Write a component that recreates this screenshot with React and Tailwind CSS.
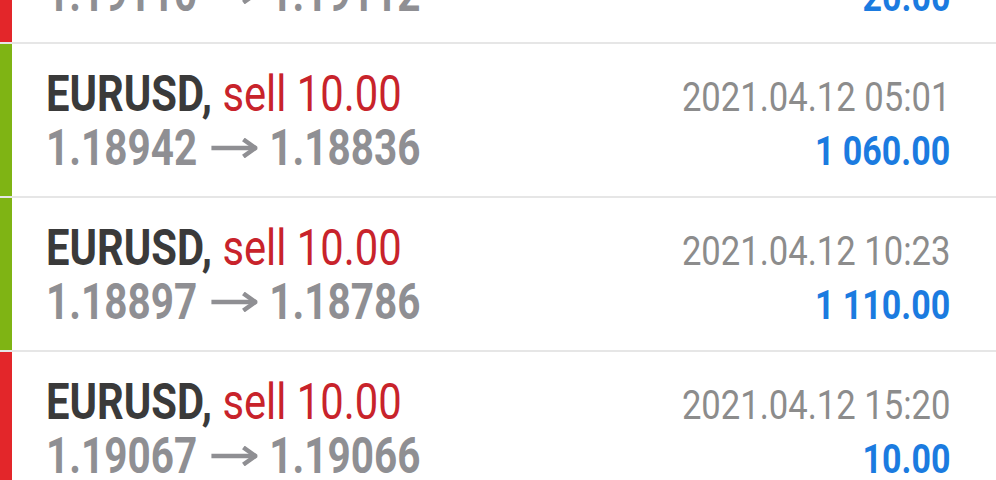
import React from "react";

const DEALS = [
  { bar: "bg-[#e3262a]", side: "sell", volume: "10.00", open: "1.19110", close: "1.19112", time: "2021.04.12 00:00", profit: "20.00" },
  { bar: "bg-[#7fb414]", side: "sell", volume: "10.00", open: "1.18942", close: "1.18836", time: "2021.04.12 05:01", profit: "1 060.00" },
  { bar: "bg-[#7fb414]", side: "sell", volume: "10.00", open: "1.18897", close: "1.18786", time: "2021.04.12 10:23", profit: "1 110.00" },
  { bar: "bg-[#e3262a]", side: "sell", volume: "10.00", open: "1.19067", close: "1.19066", time: "2021.04.12 15:20", profit: "10.00" },
];

// long thin arrow between open and close price
const Arrow = () => (
  <svg
    viewBox="0 0 46 20"
    preserveAspectRatio="none"
    className="w-[57px] h-[20px] ml-[17px] mr-[15px] shrink-0"
    fill="none"
    stroke="#8f8f93"
    strokeWidth="4.5"
  >
    <path d="M0 10 H44" />
    <path d="M32 1.5 L44 10 L32 18.5" />
  </svg>
);

const DealRow = ({ deal }) => (
  <div className="flex h-[154px] border-b-2 border-[#e6e6e6]">
    <div className={`w-[12px] shrink-0 ${deal.bar}`} />
    <div className="flex-1 flex flex-col pt-[23px] pl-[34px] pr-[46px]">
      <div className="flex justify-between items-baseline h-[54px] leading-[54px]">
        <div className="text-[50px] whitespace-nowrap origin-left scale-x-[0.835]">
          <span className="font-bold text-[#3a3a3a]">EURUSD,</span>{" "}
          <span className="text-[#c8232b]">
            {deal.side} {deal.volume}
          </span>
        </div>
        <div className="text-[40px] text-[#8c8c8c] whitespace-nowrap origin-right scale-x-[0.865]">{deal.time}</div>
      </div>
      <div className="flex justify-between items-baseline h-[54px] leading-[54px]">
        <div className="flex items-center text-[50px] font-bold text-[#8f8f93] whitespace-nowrap origin-left scale-x-[0.81]">
          <span>{deal.open}</span>
          <Arrow />
          <span>{deal.close}</span>
        </div>
        <div className="text-[40px] font-bold text-[#1b7be0] whitespace-nowrap origin-right scale-x-[0.85]">{deal.profit}</div>
      </div>
    </div>
  </div>
);

export default function App() {
  return (
    <div className="h-[480px] w-[996px] overflow-hidden bg-white font-['Roboto',sans-serif]">
      <div className="-mt-[110px]">
        {DEALS.map((deal, i) => (
          <DealRow key={i} deal={deal} />
        ))}
      </div>
    </div>
  );
}
